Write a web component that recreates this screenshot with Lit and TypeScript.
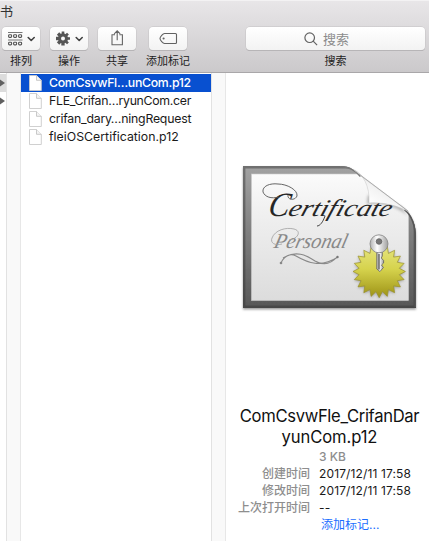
import { LitElement, html, svg, css } from "lit";
import { customElement } from "lit/decorators.js";

const files = [
  { name: "ComCsvwFl…unCom.p12", cls: "f0" },
  { name: "FLE_Crifan…ryunCom.cer", cls: "f1" },
  { name: "crifan_dary…ningRequest", cls: "f2" },
  { name: "fleiOSCertification.p12", cls: "f3" },
];

const chevron = svg`<path d="M27.5 15.5l3 3 3-3" fill="none" stroke="#444" stroke-width="1.6" stroke-linecap="round" stroke-linejoin="round"/>`;

const arrange = html`<svg width="38" height="22" viewBox="0 0 38 22">
  ${[6, 13.5].map((y) => svg`<path d="M6 ${y - 0.5}h14.5" stroke="#777"/>${[6.6, 11.6, 16.6].map(
    (x) => svg`<rect x=${x} y=${y + 1.8} width="3" height="2.6" rx=".8" fill="none" stroke="#555" stroke-width="1.1"/>`)}`)}
  <g transform="translate(-1.3 -5)">${chevron}</g></svg>`;

const gear = html`<svg width="38" height="22" viewBox="0 0 38 22">
  <g transform="translate(13 11.5)">
    ${[0, 45, 90, 135].map((a) => svg`<path d="M-1.3-7H1.3L1.7 7H-1.7Z" fill="#555" transform="rotate(${a})"/>`)}
    <circle r="5" fill="#555"/><circle r="2" fill="#f8f8f8"/>
  </g>
  <g transform="translate(-1.3 -5)">${chevron}</g></svg>`;

const share = html`<svg width="38" height="22" viewBox="0 0 38 22" fill="none" stroke="#646464" stroke-width="1.1">
  <path d="M17 7.8h-3v10h10.4v-10h-3M19.2 13.3V3.8M16.2 6.8L19.2 3.8l3 3"/></svg>`;

const tag = html`<svg width="38" height="22" viewBox="0 0 38 22" fill="none" stroke="#626262" stroke-width="1.1">
  <path d="M15.5 6.5H26.5Q27.5 6.5 27.5 7.5V15.5Q27.5 16.5 26.5 16.5H15.5C14 16.5 11 13 11 11.5S14 6.5 15.5 6.5Z"/>
  <circle cx="14.6" cy="11.5" r=".5" fill="#555"/></svg>`;

const magnifier = html`<svg width="14" height="14" viewBox="0 0 14 14" fill="none" stroke="#626262" stroke-width="1.2">
  <circle cx="5.7" cy="5.7" r="4.8"/><path d="M9.2 9.2l3.9 3.9"/></svg>`;

const page = html`<svg width="13" height="16" viewBox="0 0 13 16">
  <path d="M.5.5H7.5L12.3 5.3V15.5H.5Z" fill="#fff" stroke="#cbcbcb" stroke-width=".9"/>
  <path d="M7.5 .5V5.3h4.8" fill="#f4f4f4" stroke="#c3c3c3" stroke-width=".9"/></svg>`;

const sealPoints = Array.from({ length: 40 }, (_, i) => {
  const r = i % 2 ? 20.3 : 26.2;
  const a = (i * Math.PI) / 20 + Math.PI / 2;
  return `${(379.2 + r * Math.cos(a)).toFixed(1)},${(271.5 + r * Math.sin(a)).toFixed(1)}`;
}).join(" ");

const certificate = html`<svg width="190" height="160" viewBox="235 158 190 160">
  <defs>
    <linearGradient id="frame" x2="0" y2="1"><stop stop-color="#a2a2a2"/><stop offset="1" stop-color="#575757"/></linearGradient>
    <linearGradient id="edge" x2="0" y2="1"><stop stop-color="#707070"/><stop offset="1" stop-color="#474747"/></linearGradient>
    <linearGradient id="paper" x2="0" y2="1"><stop stop-color="#fbfbfb"/><stop offset=".3" stop-color="#f0f0f0"/><stop offset="1" stop-color="#dcdcdc"/></linearGradient>
    <linearGradient id="curl" x1="0" y1="1" x2=".6" y2=".3"><stop stop-color="#e8e8e8"/><stop offset=".35" stop-color="#fff"/><stop offset=".75" stop-color="#f2f2f2"/><stop offset="1" stop-color="#cfcfcf"/></linearGradient>
    <linearGradient id="seal" x2="0" y2="1"><stop stop-color="#e6e580"/><stop offset=".45" stop-color="#d6d34d"/><stop offset="1" stop-color="#9c9215"/></linearGradient>
    <linearGradient id="metal"><stop stop-color="#b0b0b0"/><stop offset=".4" stop-color="#fff"/><stop offset="1" stop-color="#a0a0a0"/></linearGradient>
    <filter id="shadow" x="-10%" y="-10%" width="120%" height="125%"><feDropShadow dx="0" dy="1.5" stdDeviation="1.3" flood-opacity=".4"/></filter>
    <filter id="soft" x="-30%" y="-30%" width="160%" height="160%"><feGaussianBlur stdDeviation="1.5"/></filter>
    <clipPath id="sheet"><path d="M243 166H340C350 166 357 171 361 176L405 209Q416 218 416 238V308H243Z"/></clipPath>
  </defs>
  <path d="M243 166H340C350 166 357 171 361 176L405 209Q416 218 416 238V308H243Z" fill="url(#frame)" filter="url(#shadow)"/>
  <g clip-path="url(#sheet)">
    <path d="M244.2 167.2H414.8V306.8H244.2Z" fill="none" stroke="url(#edge)" stroke-width="2.4"/>
    <rect x="251.5" y="174" width="157" height="126.5" fill="url(#paper)" stroke="#ccc" stroke-width=".6"/>
    <path d="M340 166C350 166 357 171 361 176" fill="none" stroke="#777" stroke-width="3"/>
    <path d="M405 209Q416 218 416 238V307" fill="none" stroke="#555" stroke-width="3"/>
  </g>
  <g class="script" fill="#262626">
    <text transform="translate(267 216) skewX(-12)" font-size="34" textLength="21" lengthAdjust="spacingAndGlyphs">C</text>
    <text transform="translate(287 216) skewX(-18)" font-size="24" textLength="103" lengthAdjust="spacingAndGlyphs">ertificate</text>
    <text transform="translate(273 247.5) skewX(-14)" font-size="21" fill="#888" textLength="73" lengthAdjust="spacingAndGlyphs">Personal</text>
  </g>
  <path d="M279 197C271 199 265 197 263 192C262 186 270 183 278 184C287 184 298 190 297 196C295 201 287 200 288 195" fill="none" stroke="#555" stroke-width=".9"/>
  <path d="M325 216C323 222 320 226 317 226" fill="none" stroke="#444" stroke-width="1"/>
  <path d="M282 244C275 246 270 243 272 238C275 230 286 227 294 229C302 231 298 239 289 240" fill="none" stroke="#a0a0a0" stroke-width=".8"/>
  <path d="M281 263C284 256 290 253 296 256C308 263 321 268 338 257M283 258C296 250 306 255 315 261C324 266 331 264 337 257" fill="none" stroke="#888" stroke-width="1.1"/>
  <circle cx="281" cy="263" r="1.3" fill="#888"/><circle cx="337.5" cy="257" r="1.2" fill="#777"/>
  <path d="M367 204C382 202 398 207 407 215L402 207L368 195Z" fill="#444" opacity=".4" filter="url(#soft)"/>
  <path d="M354 170C363 174 370 186 369 203C382 202 397 205 409 212L361 176Q357 172 354 170Z" fill="url(#curl)" stroke="#c4c4c4" stroke-width=".5"/>
  <path d="M359 174L408 211" fill="none" stroke="#a0a0a0" stroke-width=".8"/>
  <polygon points=${sealPoints} fill="#444" opacity=".45" filter="url(#soft)" transform="translate(0 1)"/>
  <polygon points=${sealPoints} fill="url(#seal)" stroke="#99912d" stroke-width=".7"/>
  <g stroke="#606060" stroke-width=".8">
    <path d="M376.8 252H382.3V256L381.3 258L383.6 260.5V263L381.5 265L383.4 267.5L380 271.5L376.8 269Z" fill="url(#metal)"/>
    <circle cx="379" cy="243.8" r="9" fill="url(#metal)" stroke="#808080"/>
    <circle cx="379" cy="241.5" r="2.8" fill="#777"/>
    <path d="M379 254V269.5" stroke="#333" stroke-width="1.1"/>
  </g></svg>`;

@customElement("app-root")
export class AppRoot extends LitElement {
  static styles = css`
    :host { display: block; width: 429px; height: 541px; overflow: hidden; background: #fff; color: #1a1a1a;
      font: 13px/18px Inter, "Noto Sans CJK SC", sans-serif; }
    * { box-sizing: border-box; }
    svg { display: block; flex: none; }
    .toolbar { height: 73px; border-bottom: 1px solid #a9a7a9; border-top: 1px solid #f3f2f3;
      background: linear-gradient(#e8e6e8, #cbc9cb); }
    .title { height: 26px; padding-top: 1px; line-height: 18px; color: #333; }
    .tools { display: flex; margin-left: -3px; }
    .tool { flex: none; width: 48px; display: flex; flex-direction: column; align-items: center; white-space: nowrap; }
    .tool.tags { margin-left: 3px; }
    .tool.search { width: 179px; margin-left: 54px; }
    .btn { width: 38px; height: 23px; border-radius: 4px; background: linear-gradient(#fff, #f3f3f3);
      box-shadow: 0 0 0 .5px #c3c1c3, 0 1px 0 #aaa8aa; }
    .field { width: 179px; display: flex; align-items: center; gap: 5px; color: #8c8c8c; padding-left: 58px; }
    .label { font-size: 11px; line-height: 16px; margin-top: 3px; color: #222; }
    .body { display: grid; grid-template-columns: 6px 15px 190px 15px 203px; height: 468px; }
    .parent { padding-top: 1px; }
    .slot { height: 18px; display: flex; align-items: center; }
    .slot.on { background: #dcdcdc; }
    .gutter { background: #f9f9f9; border-left: 1px solid #e2e2e2; border-right: 1px solid #e7e7e7; }
    .list { padding-top: 1px; }
    .file { height: 18px; display: flex; align-items: center; padding-left: 8px; gap: 7px; white-space: nowrap; font-size: 12.3px; }
    .file.f0 { background: #0850d0; color: #fff; }
    .f0 .name { font-weight: 500; letter-spacing: -.3px; }
    .f1 .name { letter-spacing: -.29px; }
    .f2 .name { letter-spacing: -.22px; }
    .f3 .name { letter-spacing: .02px; }
    .preview { display: flex; flex-direction: column; padding: 85px 0 0 9px; }
    .script { font-family: "Liberation Serif", serif; font-style: italic; }
    .heading { font-size: 16.6px; line-height: 21px; width: 189px; margin-top: 88px; text-align: center; color: #111; white-space: nowrap; }
    .heading div { letter-spacing: -.33px; }
    .heading div + div { letter-spacing: -.1px; }
    .meta { display: grid; grid-template-columns: 75px 1fr; column-gap: 9px; grid-auto-rows: 17px; line-height: 17px;
      font-size: 12px; white-space: nowrap; }
    .key, .size { color: #8e8e8e; font-weight: 500; }
    .key { text-align: right; }
    .value { letter-spacing: .13px; }
    .link { color: #1a6dff; padding-left: 2px; }
  `;

  render() {
    return html`
      <div class="toolbar">
        <div class="title">书</div>
        <div class="tools">
          <div class="tool"><div class="btn">${arrange}</div><div class="label">排列</div></div>
          <div class="tool"><div class="btn">${gear}</div><div class="label">操作</div></div>
          <div class="tool"><div class="btn">${share}</div><div class="label">共享</div></div>
          <div class="tool tags"><div class="btn">${tag}</div><div class="label">添加标记</div></div>
          <div class="tool search"><div class="btn field">${magnifier}<span>搜索</span></div><div class="label">搜索</div></div>
        </div>
      </div>
      <div class="body">
        <div class="parent">
          ${[true, false].map((on) => html`<div class="slot ${on ? "on" : ""}">
            <svg width="6" height="8" viewBox="0 0 6 8"><path d="M0 .5L5 4 0 7.5Z" fill="#606060"/></svg></div>`)}
        </div>
        <div class="gutter"></div>
        <div class="list">
          ${files.map((f) => html`<div class="file ${f.cls}">${page}<span class="name">${f.name}</span></div>`)}
        </div>
        <div class="gutter"></div>
        <div class="preview">
          ${certificate}
          <div class="heading"><div>ComCsvwFle_CrifanDar</div><div>yunCom.p12</div></div>
          <div class="meta">
            <span></span><span class="size">3 KB</span>
            <span class="key">创建时间</span><span class="value">2017/12/11 17:58</span>
            <span class="key">修改时间</span><span class="value">2017/12/11 17:58</span>
            <span class="key">上次打开时间</span><span class="value">--</span>
            <span></span><span class="link">添加标记...</span>
          </div>
        </div>
      </div>`;
  }
}
